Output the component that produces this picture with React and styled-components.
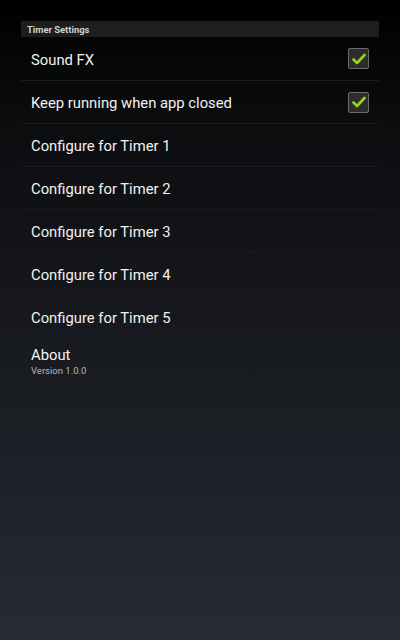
import React, { useState } from "react";
import styled, { createGlobalStyle } from "styled-components";

const GlobalStyle = createGlobalStyle`
  html, body {
    margin: 0;
    padding: 0;
    height: 100%;
  }
  body {
    background: linear-gradient(to bottom, #000000 0%, #272b33 100%);
    font-family: Roboto, "Noto Sans", sans-serif;
    color: #ffffff;
  }
`;

const Screen = styled.div`
  width: 400px;
  height: 640px;
  box-sizing: border-box;
  padding: 21px 21px 0;
  background: linear-gradient(to bottom, #000000 0%, #0c0d0f 20%, #272b34 100%);
`;

const SectionHeader = styled.div`
  height: 16px;
  display: flex;
  align-items: center;
  padding-left: 6px;
  background: #1e1e1e;
  color: #d0d0d0;
  font-size: 9.4px;
  font-weight: 700;
`;

const List = styled.div`
  display: flex;
  flex-direction: column;
`;

const Row = styled.div`
  height: ${(p) => p.h || 42}px;
  box-sizing: content-box;
  display: flex;
  align-items: center;
  justify-content: space-between;
  padding: 0 10px;
  border-bottom: 1px solid ${(p) => (p.last ? "transparent" : "#1a1b1d")};
`;

const TextBlock = styled.div`
  display: flex;
  flex-direction: column;
`;

const Title = styled.span`
  font-size: 14.8px;
  line-height: 18px;
  padding-top: 2px;
  color: #f2f2f2;
`;

const Summary = styled.span`
  font-size: 9.5px;
  line-height: 13px;
  color: #b8b8b8;
`;

const Box = styled.button`
  width: 21px;
  height: 21px;
  padding: 0;
  box-sizing: border-box;
  border: 1.5px solid #6b6b6b;
  border-radius: 2px;
  background: #2c2c2c;
  display: flex;
  align-items: center;
  justify-content: center;
  cursor: pointer;
`;

function Check({ checked, onToggle }) {
  return (
    <Box onClick={onToggle}>
      {checked && (
        <svg width="14" height="12" viewBox="0 0 14 12">
          <path
            d="M1.5 6.5 L5 10 L12.5 2"
            fill="none"
            stroke="#93d51e"
            strokeWidth="2.6"
            strokeLinecap="round"
            strokeLinejoin="round"
          />
        </svg>
      )}
    </Box>
  );
}

export default function App() {
  const [sound, setSound] = useState(true);
  const [keepRunning, setKeepRunning] = useState(true);
  const timers = [1, 2, 3, 4, 5];

  return (
    <>
      <GlobalStyle />
      <Screen>
        <SectionHeader>Timer Settings</SectionHeader>
        <List>
          <Row h={43}>
            <Title>Sound FX</Title>
            <Check checked={sound} onToggle={() => setSound(!sound)} />
          </Row>
          <Row>
            <Title>Keep running when app closed</Title>
            <Check checked={keepRunning} onToggle={() => setKeepRunning(!keepRunning)} />
          </Row>
          {timers.map((n) => (
            <Row key={n}>
              <Title>Configure for Timer {n}</Title>
            </Row>
          ))}
          <Row h={43} last>
            <TextBlock>
              <Title>About</Title>
              <Summary>Version 1.0.0</Summary>
            </TextBlock>
          </Row>
        </List>
      </Screen>
    </>
  );
}
